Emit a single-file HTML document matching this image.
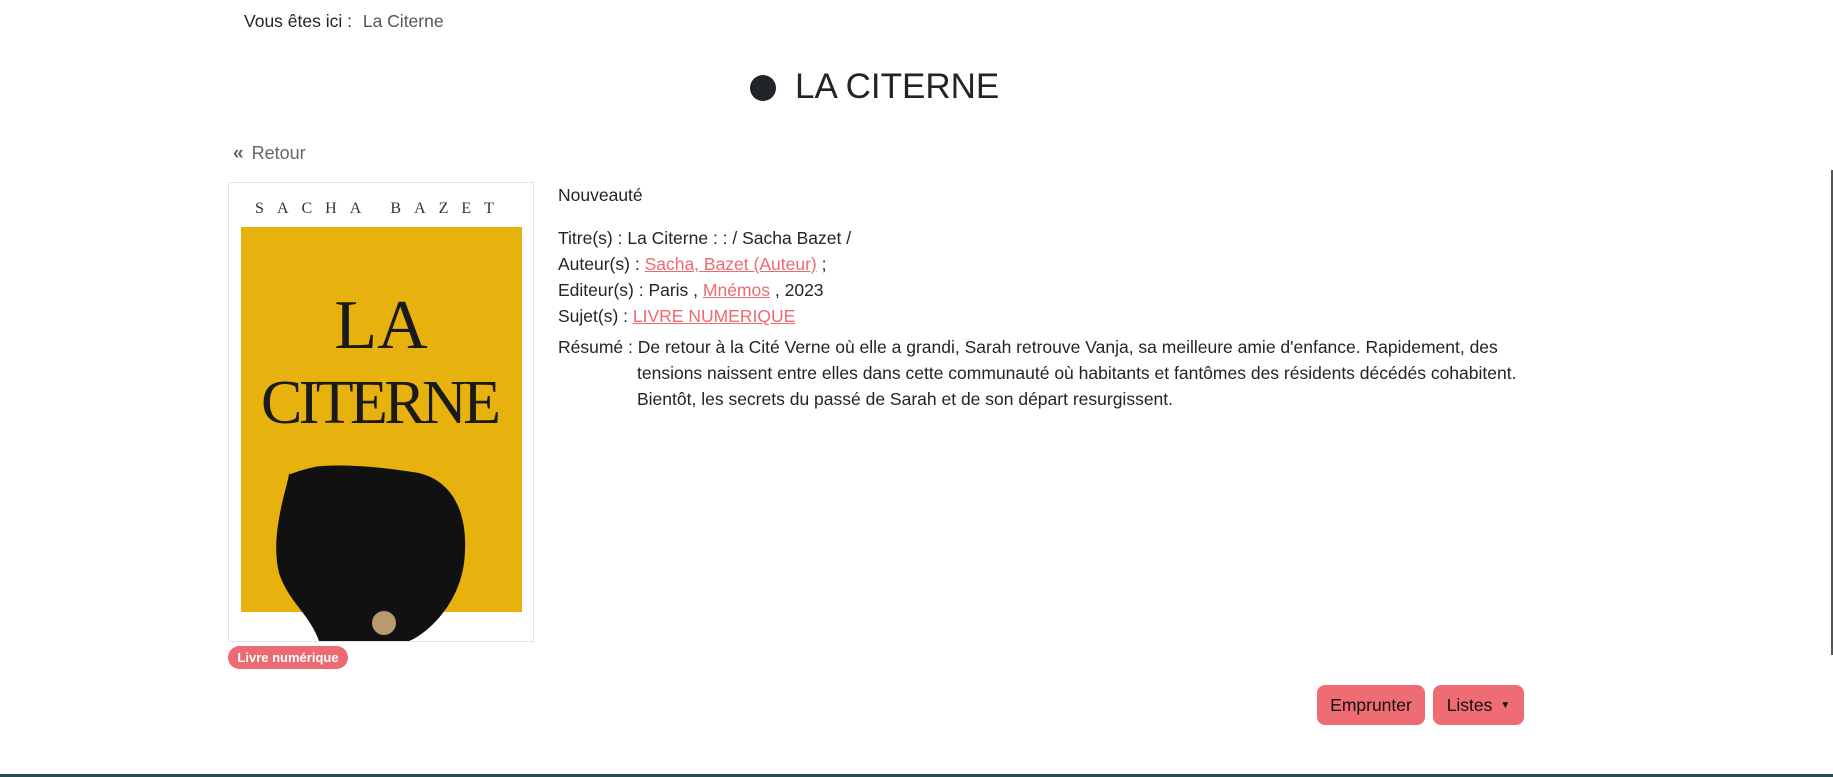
<!DOCTYPE html>
<html><head><meta charset="utf-8"><style>
body{margin:0;width:1833px;height:777px;background:#fff;font-family:"Liberation Sans",Arial,sans-serif;color:#212529;position:relative;overflow:hidden}
.a{position:absolute;white-space:nowrap}
.l{color:#ec6a72;text-decoration:underline}
.btn{position:absolute;background:#f06c73;border-radius:8px;color:#111;font-size:17.5px;display:flex;align-items:center;justify-content:center}
.t{font-size:17.5px;line-height:26px}
</style></head><body>
<div class="a" style="left:244px;top:11px;font-size:17.5px">Vous êtes ici : <span style="color:#555;margin-left:6px">La Citerne</span></div>
<div class="a" style="left:750px;top:75px;width:26px;height:26px;border-radius:50%;background:#212529"></div>
<div class="a" style="left:795px;top:67px;font-size:35px;color:#212529">LA CITERNE</div>
<div class="a" style="left:233px;top:143px;font-size:18px;color:#666"><b style="font-size:19px;letter-spacing:-3px;margin-right:6px">«</b> Retour</div>
<div class="a" style="left:228px;top:182px;width:304px;height:458px;border:1px solid #e4e4e4;background:#fff">
<svg width="304" height="458" viewBox="0 0 304 458">
<text x="152" y="30" font-family="Liberation Serif" font-size="16" letter-spacing="13" text-anchor="middle" fill="#333">SACHA BAZET</text>
<rect x="12" y="44" width="281" height="385" fill="#e8b20e"/>
<text x="152" y="165" font-family="Liberation Serif" font-size="70" text-anchor="middle" fill="#1a1a1a">LA</text>
<text x="152" y="240" font-family="Liberation Serif" font-size="62" text-anchor="middle" fill="#1a1a1a" textLength="240">CITERNE</text>
<path d="M50 390 C40 350 60 300 60 290 C80 280 130 280 190 290 C230 300 240 340 235 380 C230 420 200 450 180 458 L90 458 C80 430 60 420 50 390Z" fill="#111"/>
<path d="M60 290 C110 270 190 275 240 300" stroke="#e8b20e" stroke-width="3" fill="none"/>
<circle cx="155" cy="440" r="12" fill="#b99a6e"/>
</svg></div>
<div class="a" style="left:228px;top:646px;width:120px;height:23px;border-radius:12px;background:#ec6a72;color:#fff;font-size:13px;font-weight:bold;text-align:center;line-height:23px">Livre numérique</div>
<div class="a t" style="left:558px;top:182px">Nouveauté</div>
<div class="a t" style="left:558px;top:225px">Titre(s) : La Citerne : : / Sacha Bazet /<br>Auteur(s) : <span class="l">Sacha, Bazet (Auteur)</span> ;<br>Editeur(s) : Paris , <span class="l">Mnémos</span> , 2023<br>Sujet(s) : <span class="l">LIVRE NUMERIQUE</span></div>
<div class="a t" style="left:558px;top:334px">Résumé : De retour à la Cité Verne où elle a grandi, Sarah retrouve Vanja, sa meilleure amie d'enfance. Rapidement, des</div>
<div class="a t" style="left:637px;top:360px">tensions naissent entre elles dans cette communauté où habitants et fantômes des résidents décédés cohabitent.<br>Bientôt, les secrets du passé de Sarah et de son départ resurgissent.</div>
<div class="btn" style="left:1317px;top:685px;width:108px;height:40px">Emprunter</div>
<div class="btn" style="left:1433px;top:685px;width:91px;height:40px">Listes <span style="font-size:10px;margin-left:8px">▼</span></div>
<div class="a" style="left:1831px;top:170px;width:2px;height:485px;background:#555"></div>
<div class="a" style="left:0;top:774px;width:1833px;height:3px;background:#2b4a55"></div>
</body></html>
